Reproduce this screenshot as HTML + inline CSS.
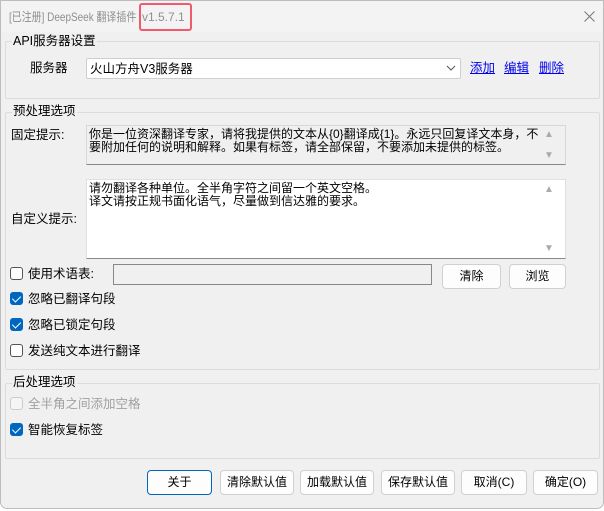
<!DOCTYPE html>
<html><head><meta charset="utf-8"><style>
*{box-sizing:border-box;margin:0;padding:0}
body{width:604px;height:511px;background:#fff;font-family:"Liberation Sans","Noto Sans CJK SC",sans-serif;font-size:12.5px;color:#000;position:relative;overflow:hidden}
.win{position:absolute;left:0;top:0;width:604px;height:509px;background:#f0f0f0;border:1px solid #bdbdbd;border-radius:0 0 7px 7px}
.title{position:absolute;left:0;top:0;width:602px;height:31px;background:#f3f3f3}
.a{position:absolute;white-space:nowrap;line-height:16px}
.grp{position:absolute;border:1px solid #dcdcdc;border-radius:2px}
.gl{position:absolute;background:#f0f0f0;padding:0 1px;line-height:14px}
.btn{position:absolute;height:25px;background:#fdfdfd;border:1px solid #d0d0d0;border-radius:4px;text-align:center;line-height:23px;font-size:12px}
.cb{position:absolute;width:13px;height:13px;border:1px solid #555;border-radius:3px;background:#fff}
.cb.on{background:#0067c0;border-color:#0067c0}
.cb.on::after{content:"";position:absolute;left:3px;top:1px;width:4px;height:7px;border:solid #fff;border-width:0 1.5px 1.5px 0;transform:rotate(45deg)}
a{color:#0000ee;text-decoration:underline}
.sm{font-size:12px;line-height:13px}
.arr{position:absolute;font-size:10px;color:#aaa;line-height:10px}
</style></head><body>
<div class="win">
<div class="title"></div>
<div class="a" style="left:8px;top:8px;color:#8f8f8f;font-size:12px;transform:scaleX(0.83);transform-origin:0 0">[已注册] DeepSeek 翻译插件</div>
<div class="a" style="left:141px;top:8px;color:#8f8f8f;font-size:12px">v1.5.7.1</div>
<div style="position:absolute;left:138px;top:2px;width:53px;height:28px;border:2px solid #f05a6a;border-radius:3px"></div>
<svg style="position:absolute;left:583px;top:10px" width="11" height="11"><path d="M0.5 0.5L10.5 10.5M10.5 0.5L0.5 10.5" stroke="#777" stroke-width="1"/></svg>

<div class="grp" style="left:4px;top:40px;width:595px;height:58px"></div>
<div class="gl" style="left:11px;top:33px">API服务器设置</div>
<div class="a" style="left:29px;top:59px">服务器</div>
<div style="position:absolute;left:85px;top:57px;width:375px;height:21px;background:#fff;border:1px solid #cfcfcf;border-radius:2px"></div>
<div class="a" style="left:89px;top:60px">火山方舟V3服务器</div>
<svg style="position:absolute;left:445px;top:64px" width="10" height="7"><path d="M1 1L5 5L9 1" fill="none" stroke="#555"/></svg>
<div class="a" style="left:469px;top:59px"><a>添加</a></div>
<div class="a" style="left:503px;top:59px"><a>编辑</a></div>
<div class="a" style="left:538px;top:59px"><a>删除</a></div>

<div class="grp" style="left:4px;top:111px;width:595px;height:258px"></div>
<div class="gl" style="left:11px;top:103px">预处理选项</div>
<div class="a" style="left:10px;top:126px">固定提示:</div>
<div style="position:absolute;left:85px;top:124px;width:480px;height:40px;background:#f0f0f0;border:1px solid #d8d8d8;border-bottom-color:#888"></div>
<div class="a sm" style="left:88px;top:127px">你是一位资深翻译专家，请将我提供的文本从{0}翻译成{1}。永远只回复译文本身，不<br>要附加任何的说明和解释。如果有标签，请全部保留，不要添加未提供的标签。</div>
<div class="arr" style="left:543px;top:129px">▲</div>
<div class="arr" style="left:543px;top:150px">▼</div>
<div class="a" style="left:10px;top:210px">自定义提示:</div>
<div style="position:absolute;left:85px;top:178px;width:480px;height:80px;background:#fff;border:1px solid #e0e0e0;border-bottom-color:#888"></div>
<div class="a sm" style="left:88px;top:181px">请勿翻译各种单位。全半角字符之间留一个英文空格。<br>译文请按正规书面化语气，尽量做到信达雅的要求。</div>
<div class="arr" style="left:543px;top:184px">▲</div>
<div class="arr" style="left:543px;top:243px">▼</div>

<div class="cb" style="left:9px;top:266px"></div>
<div class="a" style="left:27px;top:265px">使用术语表:</div>
<div style="position:absolute;left:112px;top:263px;width:319px;height:21px;background:#f0f0f0;border:1px solid #888"></div>
<div class="btn" style="left:441px;top:263px;width:59px">清除</div>
<div class="btn" style="left:508px;top:263px;width:57px">浏览</div>

<div class="cb on" style="left:9px;top:291px"></div>
<div class="a" style="left:27px;top:290px">忽略已翻译句段</div>
<div class="cb on" style="left:9px;top:317px"></div>
<div class="a" style="left:27px;top:316px">忽略已锁定句段</div>
<div class="cb" style="left:9px;top:343px"></div>
<div class="a" style="left:27px;top:342px">发送纯文本进行翻译</div>

<div class="grp" style="left:4px;top:382px;width:595px;height:76px"></div>
<div class="gl" style="left:11px;top:374px">后处理选项</div>
<div class="cb" style="left:9px;top:396px;border-color:#ccc;background:#f5f5f5"></div>
<div class="a" style="left:27px;top:395px;color:#a0a0a0">全半角之间添加空格</div>
<div class="cb on" style="left:9px;top:422px"></div>
<div class="a" style="left:27px;top:421px">智能恢复标签</div>

<div class="btn" style="left:146px;top:469px;width:65px;border-color:#0067c0">关于</div>
<div class="btn" style="left:219px;top:469px;width:74px">清除默认值</div>
<div class="btn" style="left:299px;top:469px;width:74px">加载默认值</div>
<div class="btn" style="left:380px;top:469px;width:74px">保存默认值</div>
<div class="btn" style="left:460px;top:469px;width:66px">取消(C)</div>
<div class="btn" style="left:532px;top:469px;width:65px">确定(O)</div>
</div>
</body></html>
